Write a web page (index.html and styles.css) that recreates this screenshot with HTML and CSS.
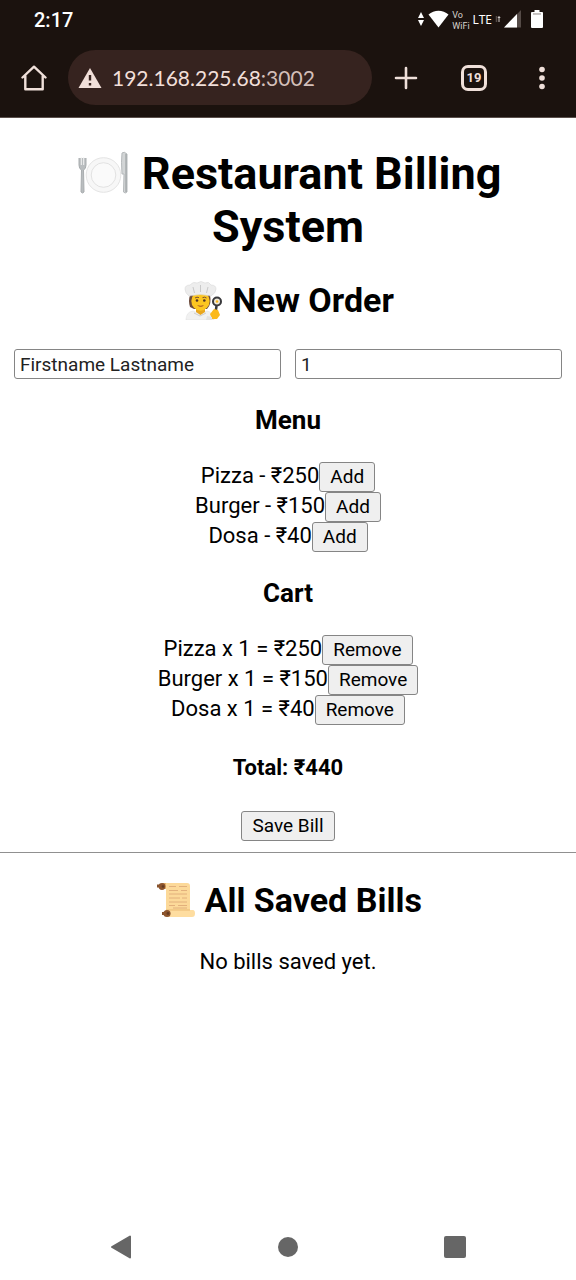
FILE: index.html
```html
<!DOCTYPE html>
<html lang="en">
<head>
<meta charset="utf-8">
<meta name="viewport" content="width=device-width, initial-scale=1">
<title>Restaurant Billing System</title>
<link rel="stylesheet" href="styles.css">
</head>
<body>
<header class="chrome">
  <div class="status">
    <span class="clock">2:17</span>
    <div class="signals">
      <svg width="8" height="16" viewBox="0 0 8 16" fill="#fff" aria-hidden="true"><path d="M4 1L7 7H1zM4 15L7 9H1z"/></svg>
      <svg width="21" height="18" viewBox="0 0 21 18" fill="#fff" aria-hidden="true"><path d="M0.5 4.6C6-.6 15-.6 20.500 4.600L10.500 17.500z"/></svg>
      <span class="vowifi"><span>Vo</span><span>WiFi</span></span>
      <span class="lte">LTE</span>
      <svg width="6" height="8" viewBox="0 0 6 8" fill="none" aria-hidden="true"><path d="M1.500 1v6" stroke="#554b47" stroke-width="1.500"/><path d="M4 1v6M2.800 2.500h2.500" stroke="#cfc8c5"/></svg>
      <svg class="cell" width="17" height="18" viewBox="0 0 17 18" aria-hidden="true"><path d="M0 17.500L17 0v17.500z" fill="#554b47"/><path d="M0 17.500L13 4v13.500z" fill="#fff"/></svg>
      <svg width="12" height="18" viewBox="0 0 12 19" preserveAspectRatio="none" fill="#fff" aria-hidden="true"><path d="M3.500 0h5v2H11a1 1 0 0 1 1 1v15a1 1 0 0 1-1 1H1a1 1 0 0 1-1-1V3a1 1 0 0 1 1-1h2.500z"/><path d="M2 4.200h8" stroke="#8c8582"/></svg>
    </div>
  </div>
  <div class="toolbar">
    <button class="tool" type="button" aria-label="Home"><svg width="26" height="26" viewBox="0 0 26 26" fill="none" stroke="#efdfd9" stroke-width="2.400" stroke-linejoin="round" stroke-linecap="round"><path d="M1.500 12.500L13 1.700l11.500 10.800M4.300 11v13.300h17.400V11"/></svg></button>
    <div class="address">
      <svg width="24" height="22" viewBox="0 0 24 22" aria-hidden="true"><path d="M12 1L23.500 21H.5z" fill="#f1dfd9"/><path d="M12 8v5.500M12 16v2.500" stroke="#36231f" stroke-width="2.400"/></svg>
      <span class="url">192.168.225.68<span class="port">:3002</span></span>
    </div>
    <button class="tool" type="button" aria-label="New tab"><svg width="24" height="24" viewBox="0 0 24 24" stroke="#efdfd9" stroke-width="2.600" stroke-linecap="round"><path d="M12 2v20M2 12h20"/></svg></button>
    <button class="tool" type="button" aria-label="Switch tabs"><span class="tabs">19</span></button>
    <button class="tool" type="button" aria-label="More options"><svg width="6" height="24" viewBox="0 0 6 24" fill="#efdfd9"><circle cx="3" cy="3.500" r="2.800"/><circle cx="3" cy="12" r="2.800"/><circle cx="3" cy="20.500" r="2.800"/></svg></button>
  </div>
</header>

<main class="page">
  <h1 class="title"><svg class="emoji-lg" viewBox="0 0 56 50" aria-hidden="true">
    <circle cx="28.500" cy="25" r="17.300" fill="#f7f7f7" stroke="#e4e4e4"/>
    <circle cx="28.500" cy="25" r="12.300" fill="#fafafa" stroke="#e2e2e2"/>
    <path d="M4 8v7q0 4 2.500 5L6 42q1.500 2 3 0l-.5-22Q11 19 11 15V8" fill="#b9bdbf" stroke="#a9adaf"/>
    <path d="M6.300 7v8M8.700 7v8" stroke="#f3f3f3"/>
    <path d="M47 3q-1 8 0 21h2l-.5 18q1.700 2 3.500 0V4q-3-3-5-1z" fill="#d2d5d6" stroke="#b5b9bb"/>
    <path d="M51 4v38" stroke="#94999b"/>
  </svg> Restaurant Billing System</h1>

  <h2 class="section"><svg class="emoji" viewBox="0 0 42 40" aria-hidden="true">
    <path d="M4 40q0-8 7-9l7 3 7-3q6 1 7 9z" fill="#f1f1f1" stroke="#e2e2e2" stroke-width=".6"/>
    <path d="M14 28h9v4l-4.500 3-4.500-3z" fill="#e9a61e"/>
    <path d="M8 15q-2 6 0 12l4 2h13q5-5 3-14z" fill="#6b4a3b"/>
    <ellipse cx="18.500" cy="21" rx="9.200" ry="9.700" fill="#fcc621"/>
    <circle cx="15" cy="20.500" r="1.300" fill="#513426"/><circle cx="22.300" cy="20.500" r="1.300" fill="#513426"/>
    <path d="M13 18q2-1.500 4-.3M20.500 17.700q2-1.200 4 .3" stroke="#765037" fill="none"/>
    <path d="M15 25q3.700 1.600 7 0-3 3.700-7 0z" fill="#a24d25"/>
    <path d="M7 16Q3 13 3 9t5-4q3-4 7-2 4-3 8 0 4-2 6 2 5 0 5 4t-5 7q-10-3-22 0z" fill="#ededed" stroke="#dadada" stroke-width=".6"/>
    <path d="M11 7l1.500 6M18.500 5v7M26 7l-1.500 6" stroke="#c9c9c9"/>
    <path d="M34.500 26l-1 7" stroke="#39393c" stroke-width="2.500"/>
    <circle cx="35" cy="21.500" r="5" fill="#39393c"/><circle cx="35" cy="21.500" r="3" fill="#eee8d8"/><circle cx="35" cy="21.500" r="1.300" fill="#f8b51b"/>
    <path d="M28 34l4-5 4 1 2 5-3 4h-5z" fill="#fbb91c"/>
    <path d="M25 36l5 1v3h-6z" fill="#e2e2e2"/>
    <path d="M12 33l6 3 6-3" fill="none" stroke="#ccc"/>
  </svg> New Order</h2>

  <form class="fields">
    <input class="field" type="text" value="Firstname Lastname" aria-label="Customer name">
    <input class="field" type="text" inputmode="numeric" value="1" aria-label="Table number">
  </form>

  <h3 class="subhead">Menu</h3>
  <div class="row"><span>Pizza - ₹250</span><button class="btn" type="button">Add</button></div>
  <div class="row"><span>Burger - ₹150</span><button class="btn" type="button">Add</button></div>
  <div class="row"><span>Dosa - ₹40</span><button class="btn" type="button">Add</button></div>

  <h3 class="subhead">Cart</h3>
  <div class="row"><span>Pizza x 1 = ₹250</span><button class="btn" type="button">Remove</button></div>
  <div class="row"><span>Burger x 1 = ₹150</span><button class="btn" type="button">Remove</button></div>
  <div class="row"><span>Dosa x 1 = ₹40</span><button class="btn" type="button">Remove</button></div>

  <h4 class="total">Total: ₹440</h4>
  <div class="row"><button class="btn" type="button">Save Bill</button></div>
  <hr class="rule">

  <h2 class="section"><svg class="emoji" viewBox="0 0 42 40" aria-hidden="true">
    <path d="M8 3h25q3 0 3 3v24H12V9H8z" fill="#fcd999"/>
    <path d="M8 3h4v6H8z" fill="#eab56c"/>
    <path d="M13 30h26q2 0 2 3.500T38 37H13z" fill="#fedda0"/>
    <path d="M12 30h24" stroke="#e9ba72"/>
    <path d="M15 6.500h7M25 6.500h8M15 10.500h9M27 10.500h6M15 14h18M15 18h11M28 18h5M15 22h18M15 25.500h6M24 25.500h9M19 28h14" stroke="#e2b07c"/>
    <path d="M3 6h5M8 33.500h5" stroke="#86512b" stroke-width="3"/>
    <circle cx="8" cy="6.500" r="3.400" fill="#8d552d"/><circle cx="13" cy="33.500" r="3.600" fill="#8d552d"/>
    <circle cx="9" cy="6.500" r="1.300" fill="#643b20"/><circle cx="14" cy="33.500" r="1.400" fill="#643b20"/>
  </svg> All Saved Bills</h2>
  <p class="empty">No bills saved yet.</p>
</main>

<nav class="sysnav" aria-label="System">
  <button class="sysbtn" type="button" aria-label="Back"><svg width="22" height="24" viewBox="0 0 22 24"><path d="M2 12L20 1.500v21z" fill="#666" stroke="#666" stroke-width="2" stroke-linejoin="round"/></svg></button>
  <button class="sysbtn" type="button" aria-label="Home screen"><svg width="22" height="22" viewBox="0 0 22 22"><circle cx="11" cy="11" r="10" fill="#666"/></svg></button>
  <button class="sysbtn" type="button" aria-label="Recent apps"><svg width="22" height="22" viewBox="0 0 22 22"><rect width="22" height="22" rx="2" fill="#666"/></svg></button>
</nav>
</body>
</html>
```

FILE: styles.css
```css
* { box-sizing: border-box; }

body {
  margin: 0;
  min-height: 100vh;
  display: flex;
  flex-direction: column;
  background: #fff;
  color: #000;
  font: 22px/26px Roboto, "Noto Sans", sans-serif;
}

button { font-family: inherit; cursor: pointer; }
svg { flex: none; }

/* Browser chrome */
.chrome {
  background: #1b120e;
  border-bottom: 1px solid #5b504c;
  padding-bottom: 12px;
}

.status {
  height: 38px;
  padding: 0 33px 0 34px;
  display: flex;
  align-items: center;
  justify-content: space-between;
  color: #fff;
}

.clock { padding-top: 2px; font-size: 20px; font-weight: 500; }

.signals { display: flex; align-items: center; gap: 3px; }

.vowifi {
  display: flex;
  flex-direction: column;
  font: 9px/11px Roboto, sans-serif;
  color: #d8d2cf;
  padding-top: 4px;
}

.lte { font: 12px/16px "Noto Sans", sans-serif; padding-top: 1px; }
.cell { margin-right: 7px; }

.toolbar {
  height: 67px;
  padding-top: 12px;
  display: flex;
  align-items: center;
}

.tool {
  width: 68px;
  height: 55px;
  padding: 0;
  border: 0;
  background: none;
  display: flex;
  align-items: center;
  justify-content: center;
}

.address {
  flex: 1;
  min-width: 0;
  height: 55px;
  padding: 0 10px;
  display: flex;
  align-items: center;
  gap: 10px;
  border-radius: 28px;
  background: #36231f;
}

.url { font: 21px/28px Lato, sans-serif; color: #f1dfd9; }
.port { color: #d3bfb9; }

.tabs {
  width: 26px;
  height: 26px;
  border: 3px solid #efdfd9;
  border-radius: 7px;
  font: 700 13px/20px Roboto, sans-serif;
  color: #efdfd9;
  text-align: center;
}

/* Billing page */
.page { flex: 1; text-align: center; }

.title { margin: 29px 14px 27px; font-size: 45px; line-height: 53px; }
.section { margin: 27px 0 29px; font-size: 34px; line-height: 40px; }
.subhead { margin: 26px 0; font-size: 26px; line-height: 31px; }
.total { margin: 30px 0; font-size: 22px; line-height: 26px; }

.emoji-lg { width: 56px; height: 50px; vertical-align: bottom; }
.emoji { width: 42px; height: 40px; vertical-align: bottom; }

.fields { display: flex; gap: 14px; padding: 0 14px; }

.field {
  flex: 1;
  min-width: 0;
  height: 30px;
  padding: 0 5px;
  border: 1px solid #858585;
  border-radius: 3px;
  background: #fff;
  font: 19px/22px Roboto, sans-serif;
  color: #222;
}

.row { display: flex; justify-content: center; align-items: baseline; }

.btn {
  height: 30px;
  padding: 0 10px;
  border: 1px solid #858585;
  border-radius: 3px;
  background: #efefef;
  font-size: 19px;
  line-height: 28px;
  color: #000;
}

.rule { margin: 11px 0 0; border: 0; border-top: 1px solid #909090; }
.empty { margin: 0; }

/* Android navigation bar */
.sysnav {
  display: grid;
  grid-template-columns: repeat(3, 1fr);
  height: 66px;
  padding: 0 37px;
}

.sysbtn {
  padding: 0;
  border: 0;
  background: none;
  display: flex;
  align-items: center;
  justify-content: center;
}
```
